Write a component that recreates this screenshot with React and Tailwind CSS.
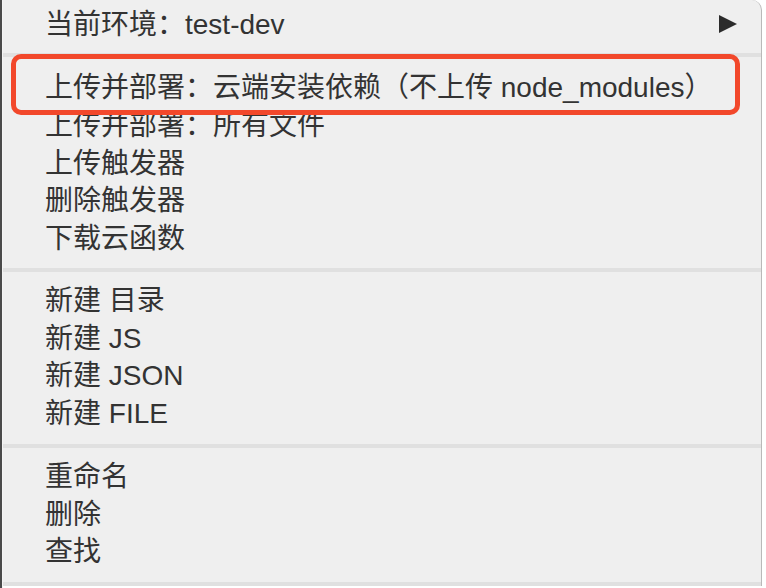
import React from 'react';

const font = { fontFamily: '"Liberation Sans", "Noto Sans CJK SC", sans-serif' };

const Row = ({ children, right }) => (
  <div className="h-[37.75px] flex items-center justify-between pl-[42px] pr-[24px] pt-[3px] text-[28px] text-[#333333] leading-none whitespace-nowrap">
    <span>{children}</span>
    {right}
  </div>
);

const Sep = () => <div className="h-[4px] bg-[#e0e0e0]" />;

export default function App() {
  return (
    <div className="relative w-[766px] h-[588px] bg-white flex overflow-hidden" style={font}>
      {/* sliver of the window behind the menu */}
      <div className="w-[3px] h-full bg-[#f4f4f4] border-l-2 border-[#4a4a4a]" />

      <div className="w-[759px] h-[586px] bg-[#efefef] border-r border-[#b9b9b9] rounded-tr-[10px] flex flex-col">
        <div className="pt-[5px] pb-[10px]">
          <Row
            right={
              <svg width="18" height="18" viewBox="0 0 18 18" className="-mt-[3px]">
                <polygon points="0,0 18,9 0,18" fill="#2b2b2b" />
              </svg>
            }
          >
            当前环境：test-dev
          </Row>
        </div>
        <Sep />
        <div className="pt-[11px] pb-[11px]">
          <Row>上传并部署：云端安装依赖（不上传 node_modules）</Row>
          <Row>上传并部署：所有文件</Row>
          <Row>上传触发器</Row>
          <Row>删除触发器</Row>
          <Row>下载云函数</Row>
        </div>
        <Sep />
        <div className="pt-[9px] pb-[12px]">
          <Row>新建 目录</Row>
          <Row>新建 JS</Row>
          <Row>新建 JSON</Row>
          <Row>新建 FILE</Row>
        </div>
        <Sep />
        <div className="pt-[9px] pb-[12px]">
          <Row>重命名</Row>
          <Row>删除</Row>
          <Row>查找</Row>
        </div>
        <Sep />
      </div>

      {/* red highlight annotation */}
      <div className="absolute left-[11px] top-[54px] w-[729px] h-[61px] border-[5px] border-[#f2482b] rounded-[10px]" />
    </div>
  );
}
